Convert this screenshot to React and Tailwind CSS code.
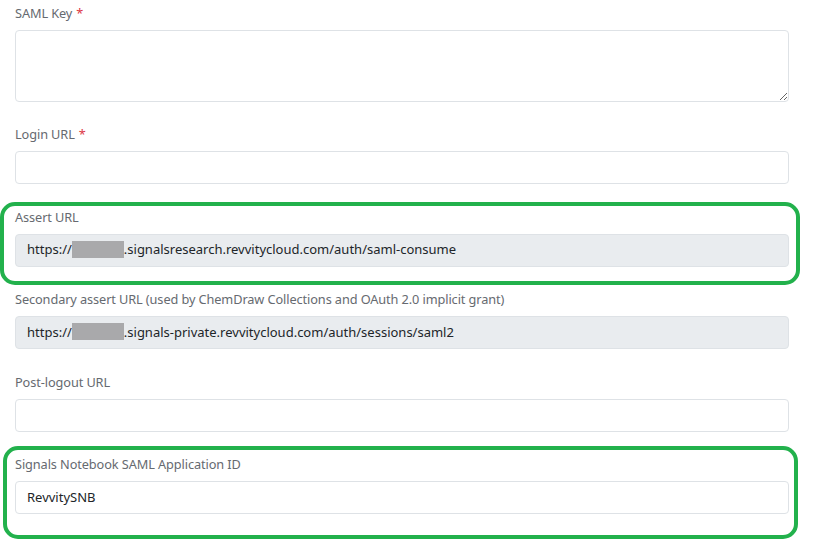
import React from 'react'

const font = { fontFamily: '"Noto Sans", "Open Sans", sans-serif' }

function Label({ text, required }) {
  return (
    <div className="h-5 text-[12.75px] leading-5 text-[#666a70] mb-[7px] tracking-[-0.1px]">
      {text}
      {required && <span className="text-[#dc3545] ml-1">*</span>}
    </div>
  )
}

function Redacted() {
  return <span className="inline-block align-middle w-[52px] h-[17px] bg-[#a9a9ab] -mt-[2px]" />
}

function Field({ label, required, readOnly, children }) {
  return (
    <div className="mb-[22.5px]">
      <Label text={label} required={required} />
      <div
        className={
          'h-[33px] rounded-[4px] border border-[#dee2e6] px-[11px] flex items-center text-[13px] text-[#212529] whitespace-nowrap ' +
          (readOnly ? 'bg-[#e9ecef]' : 'bg-white')
        }
      >
        {children}
      </div>
    </div>
  )
}

function Marked({ children, box }) {
  return (
    <div className="relative">
      {children}
      <div className={'absolute border-[4px] border-[#22b14c] rounded-[15px] pointer-events-none ' + box} />
    </div>
  )
}

export default function App() {
  return (
    <div className="w-[828px] h-[547px] bg-white overflow-hidden pl-[15px] pr-[39px] pt-[3px]" style={font}>
      <div className="mb-[22px]">
        <Label text="SAML Key" required />
        <textarea className="block w-full h-[72px] rounded-[4px] border border-[#dee2e6] resize-y outline-none" />
      </div>

      <Field label="Login URL" required />

      <Marked box="-left-[15px] -top-[5px] -right-[11px] -bottom-[18px]">
        <Field label="Assert URL" readOnly>
          <span>https://</span>
          <Redacted />
          <span>.signalsresearch.revvitycloud.com/auth/saml-consume</span>
        </Field>
      </Marked>

      <Field label="Secondary assert URL (used by ChemDraw Collections and OAuth 2.0 implicit grant)" readOnly>
        <span>https://</span>
        <Redacted />
        <span>.signals-private.revvitycloud.com/auth/sessions/saml2</span>
      </Field>

      <Field label="Post-logout URL" />

      <Marked box="-left-[12px] -top-[8px] -right-[9px] -bottom-[25px]">
        <Field label="Signals Notebook SAML Application ID">
          <span>RevvitySNB</span>
        </Field>
      </Marked>
    </div>
  )
}
